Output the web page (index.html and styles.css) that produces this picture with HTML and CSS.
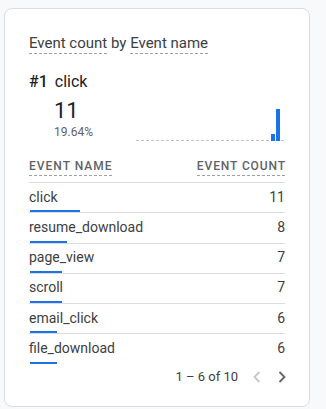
FILE: index.html
```html
<!DOCTYPE html>
<html lang="en">
<head>
<meta charset="utf-8">
<title>Event count by Event name</title>
<link rel="stylesheet" href="styles.css">
</head>
<body>
<section class="card">
  <h2 class="card-title"><span class="dim">Event count</span> by <span class="dim">Event name</span></h2>

  <div class="headline"><span class="rank">#1</span><span class="leader">click</span></div>

  <div class="stats">
    <div class="stat">
      <div class="stat-value">11</div>
      <div class="stat-share">19.64%</div>
    </div>
    <svg class="spark" width="150" height="35" viewBox="0 0 150 35" aria-hidden="true">
      <line x1="1" y1="34.5" x2="150" y2="34.5" stroke="#bdc1c6" stroke-width="1" stroke-dasharray="3 2"/>
      <rect x="136" y="28" width="4" height="7" fill="#1a73e8"/>
      <rect x="141" y="3" width="4" height="32" fill="#1a73e8"/>
    </svg>
  </div>

  <div class="table">
    <div class="thead">
      <span class="dim">Event name</span>
      <span class="dim">Event count</span>
    </div>
    <div class="row"><span class="name">click</span><span class="count">11</span><span class="bar" style="width:50px"></span></div>
    <div class="row"><span class="name">resume_download</span><span class="count">8</span><span class="bar" style="width:37px"></span></div>
    <div class="row"><span class="name">page_view</span><span class="count">7</span><span class="bar" style="width:32px"></span></div>
    <div class="row"><span class="name">scroll</span><span class="count">7</span><span class="bar" style="width:32px"></span></div>
    <div class="row"><span class="name">email_click</span><span class="count">6</span><span class="bar" style="width:27px"></span></div>
    <div class="row"><span class="name">file_download</span><span class="count">6</span><span class="bar" style="width:27px"></span></div>
  </div>

  <div class="pager">
    <span class="range">1 – 6 of 10</span>
    <svg class="chev chev-off" width="8" height="12" viewBox="0 0 8 12" aria-hidden="true"><polyline points="6.5,1 1.5,6 6.5,11"/></svg>
    <svg class="chev" width="8" height="12" viewBox="0 0 8 12" aria-hidden="true"><polyline points="1.5,1 6.5,6 1.5,11"/></svg>
  </div>
</section>
</body>
</html>
```
FILE: styles.css
```css
* { box-sizing: border-box; }

body {
  margin: 0;
  background: #f8f9fa;
  font-family: Roboto, "Liberation Sans", Arial, sans-serif;
  color: #3c4043;
}

.card {
  width: 306px;
  margin: 8px 0 0 4px;
  padding: 25px 24px 17px 24px;
  background: #fff;
  border: 1px solid #dadce0;
  border-radius: 8px;
}

/* dashed underline used for dimension/metric labels */
.dim {
  display: inline-block;
  padding-bottom: 2px;
  background: repeating-linear-gradient(to right, #9aa0a6 0 3px, transparent 3px 5px) left bottom / 100% 1px no-repeat;
}

.card-title {
  margin: 0;
  font-size: 15px;
  font-weight: 400;
  line-height: 18px;
  color: #3c4043;
}

.headline {
  margin-top: 16px;
  display: flex;
  gap: 7px;
  font-size: 16px;
  line-height: 24px;
  color: #202124;
}
.rank { font-weight: 500; }

.stats {
  margin-top: 4px;
  display: flex;
  justify-content: space-between;
  align-items: flex-end;
}
.stat { padding-left: 25px; }
.stat-value {
  font-size: 22px;
  line-height: 26px;
  color: #202124;
}
.stat-share {
  font-size: 12px;
  line-height: 16px;
  color: #5f6368;
}
.spark { display: block; margin-bottom: -1px; }

.table { margin-top: 18px; }

.thead {
  display: flex;
  justify-content: space-between;
  align-items: flex-end;
  padding-bottom: 6px;
  border-bottom: 1px solid #dadce0;
  font-size: 12px;
  line-height: 16px;
  font-weight: 500;
  letter-spacing: 1px;
  text-transform: uppercase;
  color: #5f6368;
}
.thead .dim:last-child { letter-spacing: 0.9px; margin-right: -1px; }

.row {
  display: grid;
  grid-template-columns: 1fr auto;
  grid-template-rows: 1fr 2px;
  height: 30.25px;
  border-bottom: 1px solid #dadce0;
  font-size: 14px;
  line-height: 20px;
}
.row:last-child { border-bottom: 0; height: 29.25px; }
.name { align-self: center; color: #3c4043; }
.count { align-self: center; color: #3c4043; }
.bar {
  grid-column: 1;
  grid-row: 2;
  margin-left: 1px;
  height: 2px;
  background: #1a73e8;
}

.pager {
  display: flex;
  justify-content: flex-end;
  align-items: center;
  height: 24px;
  margin-top: 1px;
  font-size: 13px;
  color: #3c4043;
}
.range { margin-right: 15px; }
.chev {
  display: block;
  fill: none;
  stroke: #5f6368;
  stroke-width: 1.8;
}
.chev-off { stroke: #c4c7c9; margin-right: 17px; }
.chev:last-child { margin-right: -1px; }
```
